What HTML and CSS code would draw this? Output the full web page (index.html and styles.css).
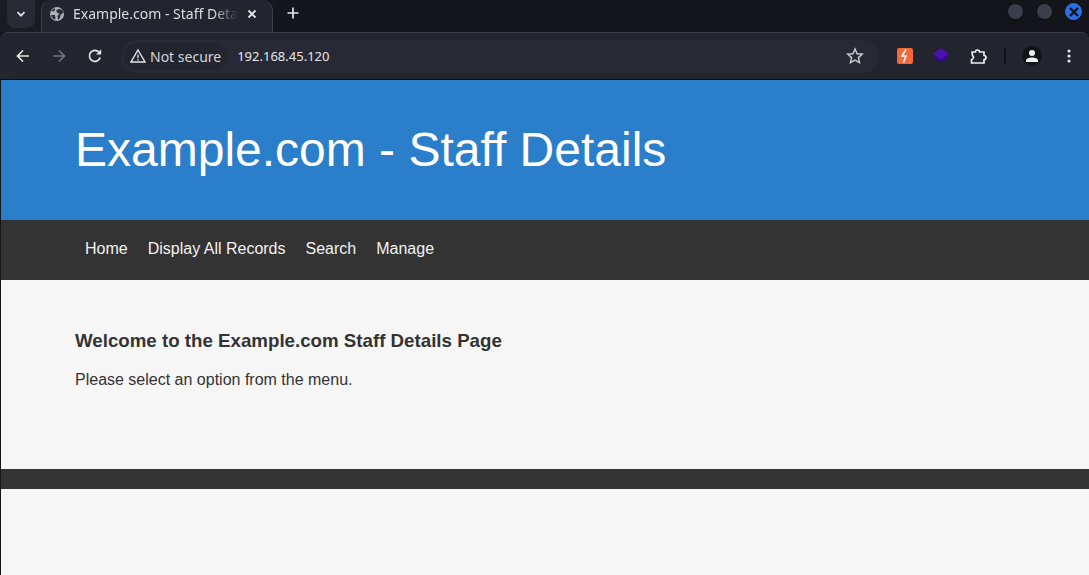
FILE: index.html
```html
<!DOCTYPE html>
<html lang="en">
<head>
<meta charset="utf-8">
<title>Example.com - Staff Details</title>
<link rel="stylesheet" href="styles.css">
</head>
<body>
<div class="tabstrip">
  <button class="tabsearch" aria-label="Search tabs">
    <svg width="12" height="12" viewBox="0 0 12 12"><path d="M2.500 4.200 6 7.700l3.500-3.500" fill="none" stroke="#e3e3e6" stroke-width="1.800"/></svg>
  </button>
  <div class="tab">
    <svg class="globe" width="16" height="16" viewBox="0 0 16 16"><circle cx="8" cy="8" r="7" fill="#aeb0b6"/><path d="M3 3.500 6.500 3 9 4.500 7.500 7 5.500 7.500 7.500 10 7 14 5 12 4.500 9 1.500 6.500ZM10 9h3.500l.5 1-3 3.500-1.500-.5ZM10.500 2 14 5l-2.500.5-1.500-1.500Z" fill="#2a2c36" transform="translate(8 8) scale(-1 1) translate(-8 -8)"/></svg>
    <div class="tabtitle">Example.com - Staff Deta</div>
    <svg class="tabclose" width="12" height="12" viewBox="0 0 12 12"><path d="M2.500 2.500l7 7M9.500 2.500l-7 7" stroke="#e6e6e9" stroke-width="1.800"/></svg>
  </div>
  <svg class="newtab" width="14" height="14" viewBox="0 0 14 14"><path d="M7 1.500v11M1.500 7h11" stroke="#e6e6e9" stroke-width="1.700"/></svg>
  <div class="winctl">
    <span class="dot"></span>
    <span class="dot"></span>
    <span class="dot close"><svg width="12" height="12" viewBox="0 0 12 12"><path d="M2 2l8 8M10 2l-8 8" stroke="#10131a" stroke-width="2.400"/></svg></span>
  </div>
</div>
<div class="toolbar">
  <svg class="navicon" width="16" height="16" viewBox="0 0 16 16"><path d="M14 8H3M8 2.500 2.500 8 8 13.500" fill="none" stroke="#e6e6e9" stroke-width="1.700"/></svg>
  <svg class="navicon" width="16" height="16" viewBox="0 0 16 16"><path d="M2 8h11M8 2.500 13.500 8 8 13.500" fill="none" stroke="#74767c" stroke-width="1.700"/></svg>
  <svg class="navicon" width="16" height="16" viewBox="0 0 16 16"><path d="M13.200 9.500A5.500 5.500 0 1 1 12 4.200" fill="none" stroke="#e6e6e9" stroke-width="1.700"/><path d="M9 6.500h5.200V1.300Z" fill="#e6e6e9"/></svg>
  <div class="omnibox">
    <div class="chip">
      <svg width="16" height="16" viewBox="0 0 16 16"><path d="M8 2 15 14H1Z" fill="none" stroke="#e3e3e6" stroke-width="1.400"/><path d="M8 6.500v3.700M8 11v1.400" stroke="#e3e3e6" stroke-width="1.300"/></svg>
      <span>Not secure</span>
    </div>
    <span class="url">192.168.45.120</span>
    <svg class="star" width="18" height="18" viewBox="0 0 18 18"><path d="M9 2l2.100 4.700 5.100.5-3.800 3.400 1.100 5L9 13l-4.500 2.600 1.100-5L1.800 7.200l5.100-.5Z" fill="none" stroke="#c9cacd" stroke-width="1.500"/></svg>
  </div>
  <div class="extensions">
    <span class="ext-bolt"><svg width="16" height="16" viewBox="0 0 16 16"><path d="M9 1.500 5 8h4l-2.500 6.500" fill="none" stroke="#fff" stroke-width="1.500"/></svg></span>
    <svg class="ext-stack" width="18" height="18" viewBox="0 0 18 18"><path d="M9 4.500 17 10.500 9 16 1 10.500Z" fill="#2c1080"/><path d="M9 1 17 7 9 12.500 1 7Z" fill="#4a12b0"/></svg>
    <svg class="ext-puzzle" width="18" height="18" viewBox="0 0 18 18"><path d="M3 5h3.500a2 2 0 0 1 4 0H15v3.500a2 2 0 0 1 0 4V16H2.500v-3.500a2.200 2.200 0 0 0 1-4L3 5Z" fill="none" stroke="#eeeef0" stroke-width="1.700" stroke-linejoin="round"/></svg>
    <span class="divider"></span>
    <span class="avatar"><svg width="14" height="14" viewBox="0 0 14 14"><circle cx="7" cy="4" r="3" fill="#f0f0f2"/><path d="M1 13v-1.500C1 9.500 4 8.500 7 8.500s6 1 6 3V13Z" fill="#f0f0f2"/></svg></span>
    <svg class="kebab" width="4" height="14" viewBox="0 0 4 14"><circle cx="2" cy="2" r="1.600" fill="#e6e6e9"/><circle cx="2" cy="7" r="1.600" fill="#e6e6e9"/><circle cx="2" cy="12" r="1.600" fill="#e6e6e9"/></svg>
  </div>
</div>
<div class="page">
  <header class="site-header"><h1>Example.com - Staff Details</h1></header>
  <nav class="site-nav">
    <a href="#">Home</a>
    <a href="#">Display All Records</a>
    <a href="#">Search</a>
    <a href="#">Manage</a>
  </nav>
  <main class="content">
    <h2>Welcome to the Example.com Staff Details Page</h2>
    <p>Please select an option from the menu.</p>
  </main>
  <footer class="site-footer"></footer>
</div>
</body>
</html>
```
FILE: styles.css
```css
* { box-sizing: border-box; }
html, body { margin: 0; height: 100%; }
body {
  width: 1089px;
  height: 575px;
  overflow: hidden;
  background: #14151a;
  display: flex;
  flex-direction: column;
  font-family: "Noto Sans", sans-serif;
}
.tabstrip {
  height: 32px;
  flex: none;
  display: flex;
  align-items: flex-start;
  background: linear-gradient(90deg, #1b1c22, #14151a 30%, #14151a);
  padding-left: 7px;
}
.tabsearch {
  width: 28px;
  height: 28px;
  border: 0;
  border-radius: 0 0 8px 8px;
  background: #272933;
  display: flex;
  align-items: center;
  justify-content: center;
  padding: 0;
}
.tab {
  width: 232px;
  height: 32px;
  margin-left: 6px;
  background: #22242e;
  border: 1px solid #3d3f49;
  border-bottom: 0;
  border-top: 0;
  border-top-left-radius: 10px;
  border-top-right-radius: 10px;
  display: flex;
  align-items: center;
  padding: 0 14px 5px 7px;
  color: #dcdde0;
  font-size: 14px;
}
.globe { flex: none; margin-right: 8px; }
.tabtitle {
  flex: 1;
  white-space: nowrap;
  -webkit-mask-image: linear-gradient(90deg, #000 85%, transparent);
  mask-image: linear-gradient(90deg, #000 85%, transparent);
}
.tabclose { flex: none; margin-left: 8px; }
.newtab { margin: 6px 0 0 13px; flex: none; }
.winctl {
  margin-left: auto;
  display: flex;
  gap: 12px;
  padding: 3px 7px 0 0;
}
.dot {
  width: 17px;
  height: 17px;
  border-radius: 50%;
  background: #3a3f4b;
  border: 1px solid #0d0e12;
  display: flex;
  align-items: center;
  justify-content: center;
}
.dot.close { background: #2a6fe8; border-color: #2a6fe8; }
.toolbar {
  height: 48px;
  flex: none;
  background: #22242e;
  border-top: 1px solid #3a3c46;
  border-bottom: 1px solid #0c0d11;
  border-top-left-radius: 8px;
  border-top-right-radius: 8px;
  display: flex;
  align-items: center;
  padding-left: 15px;
}
.navicon { flex: none; margin-right: 20px; }
.omnibox {
  width: 758px;
  height: 33px;
  margin-left: -2px;
  border-radius: 17px;
  background: #272a35;
  display: flex;
  align-items: center;
  padding-left: 3px;
  color: #e6e6e9;
  font-size: 14px;
}
.chip {
  height: 27px;
  border-radius: 14px;
  background: #22242e;
  display: flex;
  align-items: center;
  gap: 4px;
  padding: 0 7px 0 6px;
  color: #d4d5d8;
}
.url { margin-left: 9px; font-size: 13px; }
.star { margin-left: auto; margin-right: 15px; }
.extensions {
  display: flex;
  align-items: center;
  flex: none;
  margin-left: 18px;
}
.ext-bolt {
  width: 16px;
  height: 16px;
  background: #f4693a;
  border-radius: 2px;
  display: block;
}
.ext-bolt svg { display: block; }
.ext-stack { margin-left: 19px; }
.ext-puzzle { margin-left: 19px; }
.divider { width: 2px; height: 16px; background: #111217; margin-left: 17px; }
.avatar {
  width: 20px;
  height: 20px;
  margin-left: 16px;
  border-radius: 50%;
  background: #121318;
  display: flex;
  align-items: center;
  justify-content: center;
}
.kebab { margin-left: 25px; }
.page {
  flex: 1;
  background: #f6f6f6;
  border-left: 1px solid #14151a;
  font-family: "Liberation Sans", Arial, sans-serif;
  color: #333;
}
.site-header {
  height: 140px;
  background: #2b7ec9;
  padding: 0 74px 2px;
  display: flex;
  align-items: center;
}
h1 {
  margin: 0;
  font-size: 48px;
  font-weight: 400;
  color: #fff;
}
.site-nav {
  height: 60px;
  background: #333;
  padding: 0 74px 2px;
  display: flex;
  align-items: center;
  font-size: 16px;
}
.site-nav a {
  color: #f2f2f2;
  text-decoration: none;
  padding: 0 10px;
}
.content {
  height: 189px;
  padding: 50px 74px 0;
}
h2 {
  margin: 0;
  font-size: 18.720px;
  line-height: 22px;
  font-weight: 700;
}
p {
  margin: 19px 0 0;
  font-size: 16px;
  line-height: 18px;
}
.site-footer {
  height: 20px;
  background: #333;
}
```
